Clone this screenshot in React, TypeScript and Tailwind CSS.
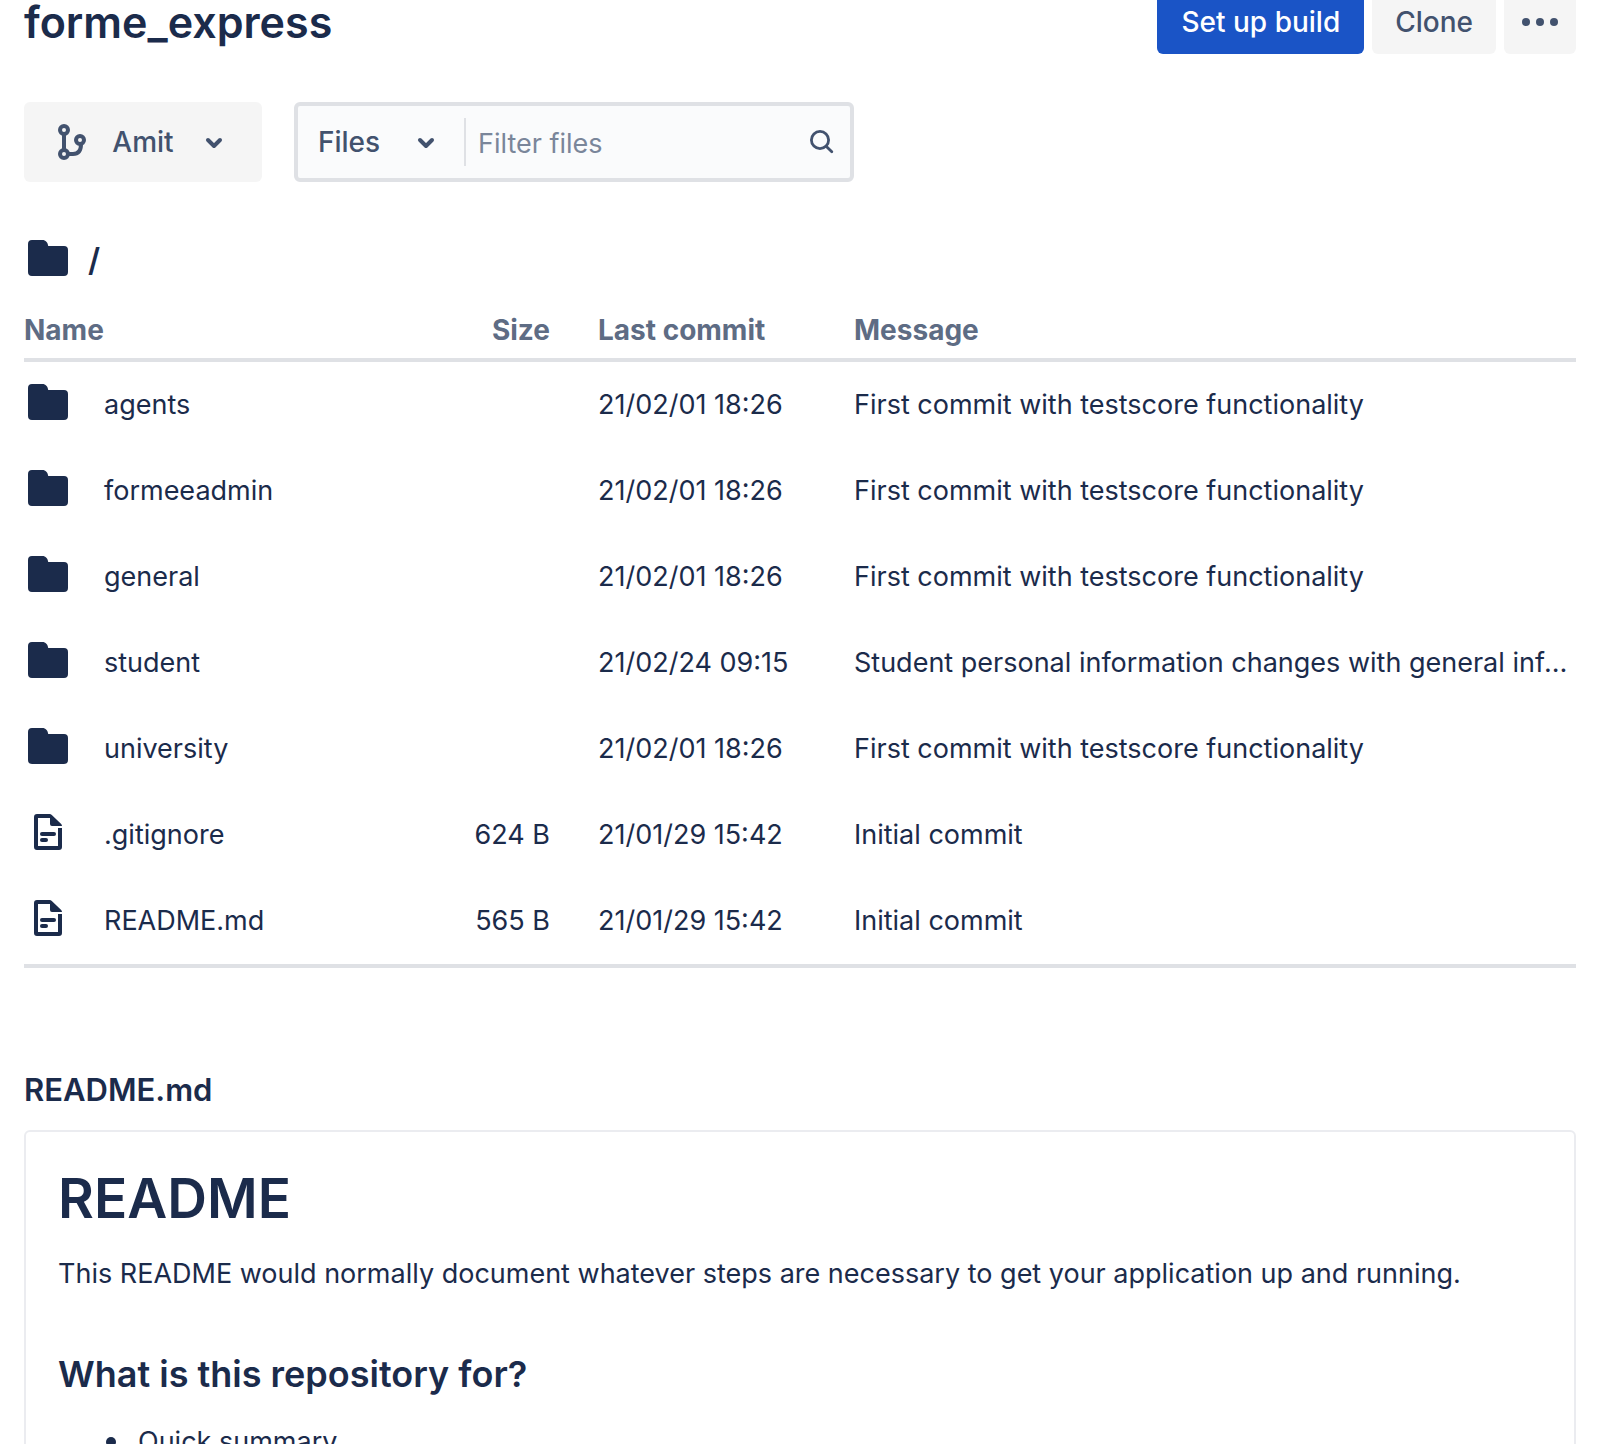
import React from 'react';

type Entry = {
  kind: 'folder' | 'file';
  name: string;
  size?: string;
  date: string;
  message: string;
};

const FIRST = 'First commit with testscore functionality';

const entries: Entry[] = [
  { kind: 'folder', name: 'agents', date: '21/02/01 18:26', message: FIRST },
  { kind: 'folder', name: 'formeeadmin', date: '21/02/01 18:26', message: FIRST },
  { kind: 'folder', name: 'general', date: '21/02/01 18:26', message: FIRST },
  {
    kind: 'folder',
    name: 'student',
    date: '21/02/24 09:15',
    message: 'Student personal information changes with general information',
  },
  { kind: 'folder', name: 'university', date: '21/02/01 18:26', message: FIRST },
  { kind: 'file', name: '.gitignore', size: '624 B', date: '21/01/29 15:42', message: 'Initial commit' },
  { kind: 'file', name: 'README.md', size: '565 B', date: '21/01/29 15:42', message: 'Initial commit' },
];

function FolderIcon() {
  return (
    <svg viewBox="0 0 24 24" className="size-12 shrink-0" fill="currentColor" aria-hidden="true">
      <path d="M2 5a2 2 0 0 1 2-2h5.200c1.600 0 2.700 1.200 2.900 3H20a2 2 0 0 1 2 2v11a2 2 0 0 1-2 2H4a2 2 0 0 1-2-2z" />
    </svg>
  );
}

function FileIcon() {
  return (
    <svg viewBox="0 0 24 24" className="size-12 shrink-0" fill="currentColor" aria-hidden="true">
      <path d="M6.500 3h6.300c.4 0 .8.15 1.100.45l4.700 4.600c.25.25.4.6.4.95h-5a1 1 0 0 1-1-1V5H7v14h10v-9h2v9.500a1.500 1.500 0 0 1-1.500 1.500h-11A1.500 1.500 0 0 1 5 19.500v-15A1.500 1.500 0 0 1 6.500 3z" />
      <rect x="8" y="12" width="8" height="2" rx="1" />
      <rect x="8" y="15" width="4" height="2" rx="1" />
    </svg>
  );
}

function BranchIcon() {
  return (
    <svg
      viewBox="0 0 24 24"
      className="size-12 shrink-0"
      fill="none"
      stroke="currentColor"
      strokeWidth="2"
      aria-hidden="true"
    >
      <circle cx="8" cy="6" r="2" />
      <circle cx="8" cy="18" r="2" />
      <circle cx="16" cy="11" r="2" />
      <path d="M8 8v8M10 18h2.500c2.600 0 4-1.700 4-5" />
    </svg>
  );
}

function ChevronIcon() {
  return (
    <svg
      viewBox="0 0 24 24"
      className="size-12 shrink-0"
      fill="none"
      stroke="currentColor"
      strokeWidth="2"
      strokeLinecap="round"
      strokeLinejoin="round"
      aria-hidden="true"
    >
      <path d="M9 11l3 3 3-3" />
    </svg>
  );
}

function SearchIcon() {
  return (
    <svg
      viewBox="0 0 24 24"
      className="size-12 shrink-0"
      fill="none"
      stroke="currentColor"
      strokeWidth="1.400"
      strokeLinecap="round"
      aria-hidden="true"
    >
      <circle cx="11" cy="11" r="4.300" />
      <path d="M14.200 14.200l2.700 2.700" />
    </svg>
  );
}

function MoreIcon() {
  return (
    <svg viewBox="0 0 24 24" className="size-12" fill="currentColor" aria-hidden="true">
      <circle cx="5" cy="12" r="2" />
      <circle cx="12" cy="12" r="2" />
      <circle cx="19" cy="12" r="2" />
    </svg>
  );
}

export default function App() {
  return (
    <div className="h-screen overflow-hidden bg-white pr-9 pl-6 font-['Inter','Liberation_Sans',sans-serif] text-[27px] leading-10 text-[#1B2B4B]">
      <header className="-mt-2.5 flex h-16 items-end justify-between">
        <h1 className="pb-2 text-[43px] leading-[48px] font-semibold">forme_express</h1>
        <div className="flex gap-2 text-[28px] font-medium text-[#42526E]">
          <button type="button" className="h-16 rounded-md bg-[#1A54C6] px-6 text-white">
            Set up build
          </button>
          <button type="button" className="h-16 rounded-md bg-[#F5F5F5] px-[23px]">
            Clone
          </button>
          <button
            type="button"
            aria-label="More actions"
            className="flex h-16 w-[72px] items-center justify-center rounded-md bg-[#F5F5F5]"
          >
            <MoreIcon />
          </button>
        </div>
      </header>

      <div className="mt-12 flex gap-8 text-[28px] text-[#42526E]">
        <button
          type="button"
          aria-haspopup="listbox"
          className="flex h-20 w-[238px] items-center justify-between rounded-md bg-[#F5F5F5] px-6 font-medium"
        >
          <BranchIcon />
          <span>Amit</span>
          <ChevronIcon />
        </button>
        <form className="flex h-20 w-[560px] items-center rounded-md border-4 border-[#DFE1E5] bg-[#FAFBFC]">
          <div className="relative flex h-12 w-[168px] items-center border-r-2 border-[#DFE1E5]">
            <select
              aria-label="Filter type"
              defaultValue="Files"
              className="h-12 w-full appearance-none bg-transparent pl-5 font-medium outline-none"
            >
              <option>Files</option>
            </select>
            <span className="pointer-events-none absolute right-3.5">
              <ChevronIcon />
            </span>
          </div>
          <input
            type="text"
            aria-label="Filter files"
            placeholder="Filter files"
            className="min-w-0 flex-1 bg-transparent pt-1 pl-3 text-[27px] outline-none placeholder:text-[#7A869A]"
          />
          <button type="button" aria-label="Search" className="mr-1">
            <SearchIcon />
          </button>
        </form>
      </div>

      <nav aria-label="Path" className="mt-[52px] flex h-12 items-center gap-4 font-semibold">
        <FolderIcon />
        <a href="#root" className="pt-1 text-[32px]">
          /
        </a>
      </nav>

      <table className="mt-5 w-full table-fixed border-separate border-spacing-0 border-b-4 border-[#DFE1E5] text-left">
        <colgroup>
          <col className="w-20" />
          <col className="w-[286px]" />
          <col className="w-40" />
          <col className="w-[48px]" />
          <col className="w-[256px]" />
          <col />
        </colgroup>
        <thead>
          <tr className="h-[60px] align-top text-[28px] text-[#5E6C84]">
            <th colSpan={2} className="border-b-4 border-[#DFE1E5] pt-2 font-bold">
              Name
            </th>
            <th className="border-b-4 border-[#DFE1E5] pt-2 text-right font-bold">Size</th>
            <td className="border-b-4 border-[#DFE1E5]" />
            <th className="border-b-4 border-[#DFE1E5] pt-2 font-bold">Last commit</th>
            <th className="border-b-4 border-[#DFE1E5] pt-2 font-bold">Message</th>
          </tr>
        </thead>
        <tbody>
          {entries.map((e) => (
            <tr key={e.name} className="h-[86px]">
              <td className="pb-1.5">{e.kind === 'folder' ? <FolderIcon /> : <FileIcon />}</td>
              <td>
                <a href={`#${e.name}`}>{e.name}</a>
              </td>
              <td className="text-right">{e.size}</td>
              <td />
              <td>{e.date}</td>
              <td className="truncate">{e.message}</td>
            </tr>
          ))}
        </tbody>
      </table>

      <h2 className="mt-[102px] text-[31px] leading-10 font-semibold">README.md</h2>

      <article className="mt-5 rounded-md border-2 border-[#EBECF0] px-8 pt-8 pb-16">
        <h1 className="text-[55px] leading-[68px] font-semibold">README</h1>
        <p className="mt-[22px]">
          This README would normally document whatever steps are necessary to get your application up and running.
        </p>
        <h2 className="mt-14 text-[36px] leading-[48px] font-semibold">What is this repository for?</h2>
        <ul className="mt-6 pl-12">
          <li className="flex items-center gap-[22px]">
            <span className="size-2.5 rounded-full bg-current" />
            Quick summary
          </li>
        </ul>
      </article>
    </div>
  );
}
